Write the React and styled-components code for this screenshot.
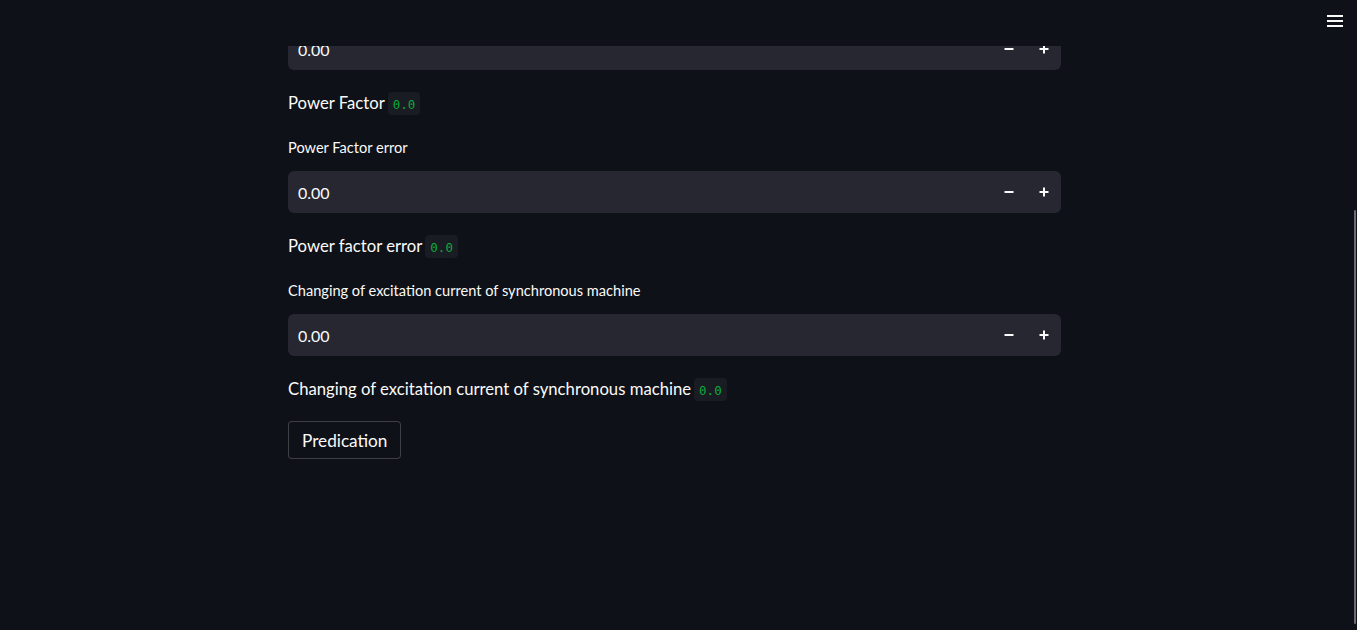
import React from 'react';
import styled, { createGlobalStyle } from 'styled-components';

const GlobalStyle = createGlobalStyle`
    html, body {
        margin: 0;
        padding: 0;
        background: #0e1117;
        overflow: hidden;
    }
    body {
        font-family: "Lato", "Open Sans", sans-serif;
        color: #fafafa;
    }
`;

const Page = styled.div`
    width: 1349px;
    height: 630px;
    overflow: hidden;
    background: #0e1117;
`;

const Header = styled.header`
    position: fixed;
    top: 0;
    left: 0;
    right: 0;
    height: 46px;
    background: #0e1117;
    display: flex;
    justify-content: flex-end;
    align-items: flex-start;
    padding: 14px 14px 0 0;
    box-sizing: border-box;
    z-index: 2;
`;

const MenuButton = styled.button`
    background: none;
    border: none;
    padding: 0;
    width: 16px;
    height: 16px;
    cursor: pointer;
`;

const ScrollThumb = styled.div`
    position: fixed;
    right: 1px;
    top: 210px;
    width: 2px;
    height: 414px;
    border-radius: 2px;
    background: #6b6d73;
    z-index: 3;
`;

const Main = styled.main`
    width: 773px;
    margin: 0 auto;
    padding-top: 28px;
    display: flex;
    flex-direction: column;
    gap: 21px;
`;

const Widget = styled.div`
    display: flex;
    flex-direction: column;
    gap: 13px;
    margin-top: 2px;
`;

const Label = styled.label`
    font-size: 14.6px;
    line-height: 20px;
    color: #fafafa;
`;

const InputBox = styled.div`
    height: 42px;
    display: flex;
    align-items: center;
    background: #262730;
    border-radius: 6px;
    padding: 0 0 0 10px;
`;

const Input = styled.input`
    flex: 1;
    background: transparent;
    border: none;
    outline: none;
    color: #fafafa;
    font-family: inherit;
    font-size: 16px;
    padding: 0;
`;

const Step = styled.button`
    width: 35px;
    height: 38px;
    background: transparent;
    border: none;
    color: #fafafa;
    display: flex;
    align-items: center;
    justify-content: center;
    padding: 0;
    cursor: pointer;
`;

const Text = styled.p`
    margin: 0;
    font-size: 16.7px;
    line-height: 24px;
    color: #fafafa;
    display: flex;
    align-items: center;
    gap: 3px;
`;

const Code = styled.code`
    font-family: "DejaVu Sans Mono", "Liberation Mono", monospace;
    font-size: 12.5px;
    color: #09ab3b;
    background: #1a1c23;
    border-radius: 4px;
    padding: 0 5px;
    height: 23px;
    line-height: 26px;
`;

const Button = styled.button`
    align-self: flex-start;
    height: 38px;
    padding: 0 13px;
    background: #0e1117;
    border: 1px solid rgba(250, 250, 250, 0.2);
    border-radius: 4px;
    color: #fafafa;
    font-family: inherit;
    font-size: 17.2px;
    margin-top: -1px;
`;

function MinusIcon() {
    return (
        <svg width="10" height="10" viewBox="0 0 10 10">
            <rect x="0.5" y="4" width="9" height="2" fill="#fafafa" />
        </svg>
    );
}

function PlusIcon() {
    return (
        <svg width="10" height="10" viewBox="0 0 10 10">
            <rect x="0.5" y="4" width="9" height="2" fill="#fafafa" />
            <rect x="4" y="0.5" width="2" height="9" fill="#fafafa" />
        </svg>
    );
}

function NumberInput({ label, value }) {
    return (
        <Widget>
            {label && <Label>{label}</Label>}
            <InputBox>
                <Input type="text" defaultValue={value} />
                <Step aria-label="decrement"><MinusIcon /></Step>
                <Step aria-label="increment"><PlusIcon /></Step>
            </InputBox>
        </Widget>
    );
}

const fields = [
    { label: 'Power Factor error', out: 'Power factor error' },
    {
        label: 'Changing of excitation current of synchronous machine',
        out: 'Changing of excitation current of synchronous machine',
    },
];

export default function App() {
    return (
        <Page>
            <GlobalStyle />
            <Header>
                <MenuButton aria-label="menu">
                    <svg width="16" height="14" viewBox="0 0 16 14">
                        <rect x="0" y="1" width="16" height="2" fill="#fafafa" />
                        <rect x="0" y="6" width="16" height="2" fill="#fafafa" />
                        <rect x="0" y="11" width="16" height="2" fill="#fafafa" />
                    </svg>
                </MenuButton>
            </Header>
            <ScrollThumb />
            <Main>
                <InputBox>
                    <Input type="text" defaultValue="0.00" />
                    <Step aria-label="decrement"><MinusIcon /></Step>
                    <Step aria-label="increment"><PlusIcon /></Step>
                </InputBox>
                <Text>Power Factor <Code>0.0</Code></Text>
                {fields.map((f) => (
                    <React.Fragment key={f.label}>
                        <NumberInput label={f.label} value="0.00" />
                        <Text>{f.out} <Code>0.0</Code></Text>
                    </React.Fragment>
                ))}
                <Button>Predication</Button>
            </Main>
        </Page>
    );
}
